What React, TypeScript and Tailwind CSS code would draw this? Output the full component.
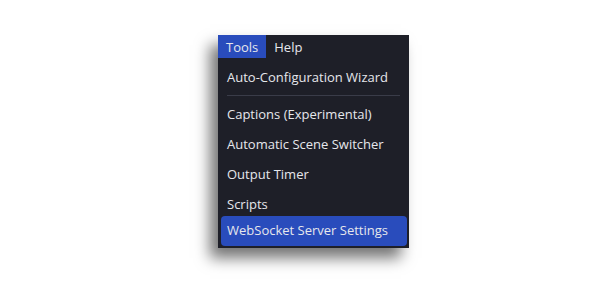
const items = [
  'Captions (Experimental)',
  'Automatic Scene Switcher',
  'Output Timer',
  'Scripts',
  'WebSocket Server Settings',
];

export default function App() {
  return (
    <div className="flex h-[300px] w-[600px] items-start justify-center bg-white pt-[35px] font-['Open_Sans',sans-serif] text-[13px] text-[#e6e7ec]">
      <div className="ml-[27px] flex h-[213px] w-[191px] flex-col bg-[#1e1f28] shadow-[-8px_10px_14px_rgba(0,0,0,0.55)]">
        <div className="flex h-[23px] items-stretch">
          <span className="flex items-center bg-[#294cbc] px-2 pt-[3px]">Tools</span>
          <span className="flex items-center px-2 pt-[3px]">Help</span>
        </div>
        <div className="flex flex-col px-[3px] pt-[5px]">
          <div className="flex h-[30px] items-center px-[6px]">Auto-Configuration Wizard</div>
          <div className="mx-[6px] mt-[2px] mb-[4px] h-px bg-[#3a3c49]" />
          {items.map((label, i) => {
            const last = i === items.length - 1;
            const scripts = i === items.length - 2;
            return (
              <div
                key={label}
                className={
                  'flex items-center rounded px-[6px] ' +
                  (last ? 'mr-[-1px] h-[30px] bg-[#294cbc]' : scripts ? 'h-[26px] pt-[4px]' : 'h-[30px]')
                }
              >
                {label}
              </div>
            );
          })}
        </div>
      </div>
    </div>
  );
}
